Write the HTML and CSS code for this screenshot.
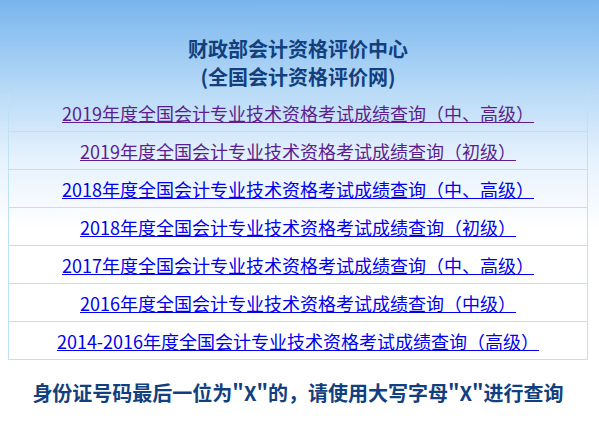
FILE: index.html
```html
<!DOCTYPE html>
<html lang="zh-CN">
<head>
<meta charset="utf-8">
<title>财政部会计资格评价中心</title>
<link rel="stylesheet" href="styles.css">
</head>
<body>
<div class="page">
  <div class="header">
    <div class="title">财政部会计资格评价中心</div>
    <div class="title">(全国会计资格评价网)</div>
  </div>
  <div class="list">
    <div class="row"><a class="link visited" href="#">2019年度全国会计专业技术资格考试成绩查询（中、高级）</a></div>
    <div class="row"><a class="link visited" href="#">2019年度全国会计专业技术资格考试成绩查询（初级）</a></div>
    <div class="row"><a class="link" href="#">2018年度全国会计专业技术资格考试成绩查询（中、高级）</a></div>
    <div class="row"><a class="link" href="#">2018年度全国会计专业技术资格考试成绩查询（初级）</a></div>
    <div class="row"><a class="link" href="#">2017年度全国会计专业技术资格考试成绩查询（中、高级）</a></div>
    <div class="row"><a class="link" href="#">2016年度全国会计专业技术资格考试成绩查询（中级）</a></div>
    <div class="row"><a class="link" href="#">2014-2016年度全国会计专业技术资格考试成绩查询（高级）</a></div>
  </div>
  <div class="note">身份证号码最后一位为"X"的，请使用大写字母"X"进行查询</div>
</div>
</body>
</html>
```
FILE: styles.css
```css
html, body {
  margin: 0;
  padding: 0;
}
body {
  width: 599px;
  height: 425px;
  overflow: hidden;
  background: linear-gradient(to bottom, #78b5ed 0px, #b8daf7 90px, #e6f2fd 160px, #ffffff 230px);
  font-family: "Noto Sans CJK SC", "Noto Sans", sans-serif;
}
.page {
  padding: 35px 0 0 8px;
  width: 580px;
}
.header {
  display: flex;
  flex-direction: column;
  align-items: center;
  margin-bottom: 2px;
}
.title {
  font-size: 20px;
  line-height: 28px;
  font-weight: bold;
  color: #12407e;
}
.list {
  border: 1px solid #bfe2f3;
  border-top-color: rgba(191, 226, 243, 0.4);
}
.row {
  height: 37px;
  display: flex;
  align-items: center;
  justify-content: center;
  border-top: 1px solid #bfe2f3;
}
.row:first-child {
  border-top: none;
}
.link {
  font-size: 18px;
  line-height: 24px;
  color: #0000ee;
  text-decoration: underline;
}
.link.visited {
  color: #5a1f8c;
}
.note {
  margin-top: 19px;
  text-align: center;
  font-size: 20px;
  line-height: 28px;
  font-weight: bold;
  color: #12407e;
}
```
